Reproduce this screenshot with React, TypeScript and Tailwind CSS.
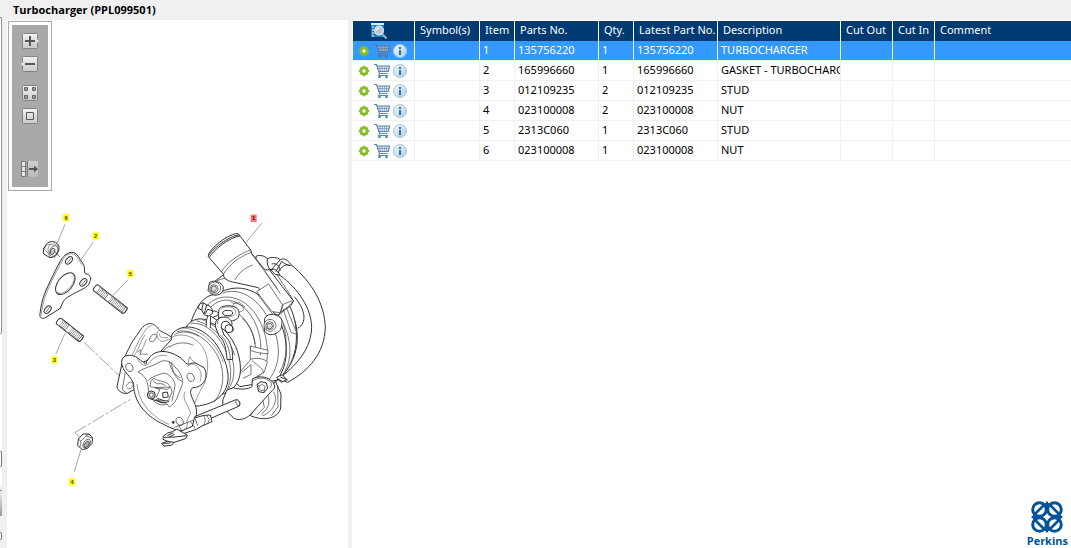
import type { ReactNode } from "react";

type Part = {
	item: number;
	partNo: string;
	qty: number;
	description: string;
};

const parts: Part[] = [
	{ item: 1, partNo: "135756220", qty: 1, description: "TURBOCHARGER" },
	{ item: 2, partNo: "165996660", qty: 1, description: "GASKET - TURBOCHARGER" },
	{ item: 3, partNo: "012109235", qty: 2, description: "STUD" },
	{ item: 4, partNo: "023100008", qty: 2, description: "NUT" },
	{ item: 5, partNo: "2313C060", qty: 1, description: "STUD" },
	{ item: 6, partNo: "023100008", qty: 1, description: "NUT" },
];

const headers = [
	{ label: "Symbol(s)", width: "w-[65px]" },
	{ label: "Item", width: "w-[35px]" },
	{ label: "Parts No.", width: "w-[84px]" },
	{ label: "Qty.", width: "w-[35px]" },
	{ label: "Latest Part No.", width: "w-[84px]" },
	{ label: "Description", width: "w-[123px]" },
	{ label: "Cut Out", width: "w-[52px]" },
	{ label: "Cut In", width: "w-[42px]" },
];

function GearIcon() {
	return (
		<svg width="12" height="12" viewBox="0 0 12 12">
			<g stroke="#86bd2c" strokeWidth="2.600">
				<path d="M6 .8v10.400M.8 6h10.400M2.500 2.500l7 7M9.500 2.500l-7 7" />
			</g>
			<circle cx="6" cy="6" r="4.200" fill="#86bd2c" />
			<circle cx="6" cy="6" r="1.700" fill="#fff" />
		</svg>
	);
}

function CartIcon({ disabled }: { disabled?: boolean }) {
	const color = disabled ? "#5f7590" : "#5b84b1";
	return (
		<svg width="16" height="16" viewBox="0 0 16 16" fill="none">
			<path d="M3.500 3H15.500L14 8H5z" fill={disabled ? "#8fb3dc" : "#e6eef7"} />
			<path d="M0 1.500h2.500L5.500 10.500H13.500M3 3H15.700L14.200 8.500H5" stroke={color} strokeWidth="1.200" />
			<path d="M6 3v5M8.200 3v5M10.400 3v5M12.600 3v5M4 5.500h11" stroke={color} strokeWidth=".6" />
			<path d="M5.500 10.500l-1 2H14" stroke={color} />
			<circle cx="5.500" cy="14" r="1.300" fill={disabled ? color : "#3f86c5"} />
			<circle cx="12.500" cy="14" r="1.300" fill={disabled ? color : "#3f86c5"} />
		</svg>
	);
}

function InfoIcon() {
	return (
		<svg width="14" height="14" viewBox="0 0 14 14">
			<defs>
				<linearGradient id="info" x1="0" y1="0" x2="1" y2="1">
					<stop offset="0" stopColor="#f4f9fd" />
					<stop offset="1" stopColor="#a9cce6" />
				</linearGradient>
			</defs>
			<circle cx="7" cy="7" r="6.500" fill="url(#info)" stroke="#a8c6dd" />
			<path d="M6 3h2v2H6zM6 6h2v5H6z" fill="#3d6d99" />
		</svg>
	);
}

function SearchIcon() {
	return (
		<svg width="16" height="16" viewBox="0 0 16 16" fill="none">
			<path d="M0 0h13v14H0z" fill="#1f7fb8" />
			<path d="M0 1h13" stroke="#d6eefb" strokeWidth="2" />
			<path d="M1 4h2M1 7h2M1 10h2M1 13h2" stroke="#fff" />
			<path d="M11 11l4.500 4.500" stroke="#8fb0cc" strokeWidth="2" />
			<circle cx="8" cy="7.500" r="4.300" fill="#b7c9d8" stroke="#e9f1f7" strokeWidth="1.200" />
			<path d="M5.500 7.500a2.600 2.600 0 0 1 2.500-2.600" stroke="#fff" />
		</svg>
	);
}

function ToolButton({ label, children }: { label: string; children: ReactNode }) {
	return (
		<button type="button" aria-label={label} className="block h-4 w-[18px]">
			<svg width="18" height="16" viewBox="0 0 18 16" fill="none">
				<defs>
					<linearGradient id="tool" x1="0" y1="0" x2="0" y2="1">
						<stop offset="0" stopColor="#f3f3f3" />
						<stop offset="1" stopColor="#c9c9c9" />
					</linearGradient>
				</defs>
				{children}
			</svg>
		</button>
	);
}

function Toolbar() {
	const face = <rect x="1.500" y=".5" width="15" height="15" rx="1" fill="url(#tool)" stroke="#828282" />;
	return (
		<div className="ml-px mt-px w-11 border border-[#a9a9a9] p-[3px]">
			<div className="flex flex-col items-center gap-[7px] bg-[#a9a9a9] pb-[10px] pt-2">
				<ToolButton label="Zoom in">
					{face}
					<path d="M16 6l2 2-2 2z" fill="#e8e8e8" />
					<path d="M4 8h10M9 3v10" stroke="#555" strokeWidth="2" />
				</ToolButton>
				<ToolButton label="Zoom out">
					{face}
					<path d="M2 6L0 8l2 2z" fill="#f3f3f3" />
					<path d="M4 8h10" stroke="#555" strokeWidth="2" />
				</ToolButton>
				<div className="flex flex-col gap-[7px] pb-[30px] pt-[6px]">
					<ToolButton label="Fit page">
						{face}
						<path d="M3.500 2.500h3v3h-3zM11.500 2.500h3v3h-3zM3.500 10.500h3v3h-3zM11.500 10.500h3v3h-3z" fill="#999" stroke="#666" />
					</ToolButton>
					<ToolButton label="Actual size">
						{face}
						<path d="M5.500 4.500h7v7h-7z" stroke="#555" />
					</ToolButton>
				</div>
				<ToolButton label="Toggle list">
					<path d="M.5 .5h4v15h-4z" fill="#e9e9e9" stroke="#777" />
					<path d="M0 5.500h5M0 10.500h5" stroke="#777" />
					<path d="M6 0h11v16H6z" fill="url(#tool)" opacity=".5" />
					<path d="M6.500 0v16" stroke="#777" />
					<path d="M8 8h6" stroke="#555" strokeWidth="2" />
					<path d="M13 4.500L17 8l-4 3.500z" fill="#555" />
				</ToolButton>
			</div>
		</div>
	);
}

function Callout({ x, y, n, active }: { x: number; y: number; n: number; active?: boolean }) {
	return (
		<g>
			<rect x={x - 9} y={y - 11} width="18" height="22" fill={active ? "#f87878" : "#ffff00"} />
			<text
				x={x}
				y={y + 6}
				textAnchor="middle"
				fill={active ? "#5a0000" : "#444400"}
				className="font-['Liberation_Sans'] text-[17px] font-bold"
			>
				{n}
			</text>
		</g>
	);
}

// stud drawn along the x axis, then turned into place
function Stud({ x, y, angle, length }: { x: number; y: number; angle: number; length: number }) {
	const threads: number[] = [];
	for (let t = 6; t < length - 4; t += 5) {
		if (t < length * 0.36 || t > length * 0.47) threads.push(t);
	}
	return (
		<g transform={`translate(${x} ${y}) rotate(${angle})`}>
			<path d={`M0 -11H${length}A5 11 0 0 1 ${length} 11H0A5 11 0 0 1 0 -11z`} fill="#fff" />
			<ellipse cx={length} cy="0" rx="5" ry="11" />
			{threads.map((t) => (
				<path key={t} d={`M${t} -11A5 11 0 0 1 ${t} 11`} strokeWidth="1.800" />
			))}
		</g>
	);
}

function Diagram() {
	return (
		<svg viewBox="0 0 1023 1071" className="block w-full" role="img" aria-label="Turbocharger exploded view">
			{/* leader and centre lines */}
			<g fill="none" stroke="#777" strokeWidth="2">
				<path d="M174 100L151 156M258 154L220 209M361 268L318 314M174 427L147 488M222 775L202 842M764 97L715 157" />
				<path d="M232 455L338 555M203 725L370 625" strokeDasharray="40 6 10 6" />
				<path d="M203 725L218 738" />
			</g>

			{/* gasket, nuts and studs */}
			<g transform="translate(39 27)" fill="#fff" stroke="#333" strokeWidth="3" strokeLinejoin="round">
				<path d="M77 136C82 124 101 121 111 130L117 139 116 153 105 170 90 173 71 162 70 147z" />
				<path d="M77 136L90 133 105 132 116 140M77 136L74 149 85 160 90 173M90 133L84 145 85 160" strokeWidth="1.500" fill="none" />
				<ellipse cx="101" cy="153" rx="11" ry="17" transform="rotate(25 101 153)" strokeWidth="2" />
				<ellipse cx="98" cy="154" rx="6" ry="10" transform="rotate(25 98 154)" fill="#ccc" strokeWidth="2" />
				<path d="M102 152L120 171" strokeWidth="2" />
				<path d="M126 175C137 161 152 153 165 159C174 164 181 181 191 194C196 204 191 217 196 221C212 222 214 235 210 245C205 265 177 270 151 287C128 299 129 307 121 325C106 334 91 345 74 354C64 358 57 350 60 340C64 316 65 304 74 281C83 257 114 194 126 175z" />
				<path d="M130 176C141 162 152 158 164 164C173 170 178 184 187 196" strokeWidth="1.500" fill="none" />
				<path d="M63 347C67 321 70 304 78 283C87 257 115 201 130 177" strokeWidth="1.500" fill="none" />
				<ellipse cx="136" cy="251" rx="38" ry="22" transform="rotate(-51 136 251)" />
				<path d="M109 275C116 286 135 279 149 263C160 250 166 235 161 224" strokeWidth="1.500" fill="none" />
				<ellipse cx="147" cy="181" rx="13" ry="8" transform="rotate(-48 147 181)" />
				<ellipse cx="190" cy="247" rx="13" ry="8" transform="rotate(-48 190 247)" />
				<ellipse cx="83" cy="329" rx="13" ry="8" transform="rotate(-48 83 329)" />
				<path d="M142 188L154 174M185 255L197 240M78 336L90 321" strokeWidth="2" />
				<Stud x={228} y={264} angle={38} length={108} />
				<Stud x={117} y={364} angle={38} length={82} />
			</g>
			<g transform="translate(-21 387)" fill="#fff" stroke="#333" strokeWidth="3" strokeLinejoin="round">
				<path d="M235 357L249 342 267 342 278 354 276 370 263 385 248 389 233 377z" />
				<path d="M235 357L243 364 258 347 267 342M243 364L240 380M258 347L277 355" fill="none" strokeWidth="2" />
				<ellipse cx="260" cy="371" rx="9" ry="15" transform="rotate(35 260 371)" strokeWidth="2" />
				<ellipse cx="260" cy="373" rx="6" ry="11" transform="rotate(35 260 373)" fill="#aaa" strokeWidth="2" />
			</g>

			{/* outlet pipe and compressor housing */}
			<g transform="translate(519 27)" fill="#fff" stroke="#333" strokeWidth="3" strokeLinejoin="round">
				<path d="M228 169C239 163 254 168 262 176C276 170 292 172 301 179C312 173 324 180 332 193C398 248 433 312 436 381C434 460 387 512 323 547L289 532L220 430z" />
				<path d="M300 226C355 266 394 325 395 382C393 445 354 490 305 530" fill="none" />
				<path d="M262 176C260 191 264 202 272 211L301 179M275 192C289 188 301 198 300 213M287 216L305 184C318 194 328 199 334 195M294 218C304 198 319 190 330 197M268 205L285 223 300 226M272 211C282 204 291 207 300 226" fill="none" />
				<path d="M327 325C360 375 366 460 310 522M343 290C378 331 381 369 353 385" fill="none" />
				<path d="M103 245L130 225 250 260 330 320C360 385 360 480 295 540L180 560 20 410C40 330 65 290 100 284z" />
				<path d="M106 285C178 239 248 274 288 342C324 400 335 492 285 548" fill="none" />
				<path d="M127 280C176 260 231 292 264 354C300 410 310 485 266 540" fill="none" strokeWidth="2" />
				<path d="M80 318C108 286 155 281 197 311C245 349 265 416 262 470C260 503 248 522 232 532M91 323C120 292 160 292 199 329C235 369 247 422 241 465M168 338C200 351 224 405 227 445M186 355C208 373 222 398 225 432" fill="none" strokeWidth="2" />
				<path d="M300 350C334 410 345 485 300 534M310 372C323 423 323 477 298 518" fill="none" strokeWidth="2" />
				<path d="M85 170C82 149 150 97 174 101L181 109 212 150 215 161 255 210 268 209 307 260 340 302 333 317 301 338 294 348 278 335 235 263 158 246C139 242 130 233 130 222z" />
				<path d="M86 167C92 151 148 106 177 105M88 173C98 151 151 110 180 108" fill="none" strokeWidth="3" />
				<path d="M124 216C137 190 182 159 211 150M130 224C143 196 185 165 215 157M165 240C175 219 195 203 218 195M215 161L292 266M255 214L301 281" fill="none" strokeWidth="2" />
				<path d="M230 275L266 252 307 314 301 338 276 335zM140 239L132 235 111 242" strokeWidth="2" />
				<path d="M231 281L280 345 300 344 341 303M301 338L310 314M307 314L337 302" fill="none" strokeWidth="2" />
				<path d="M309 326L333 397 350 403M319 322L347 392M291 224L339 298" fill="none" strokeWidth="2" />
				<path d="M89 247C102 239 126 246 130 262C130 281 115 289 96 284L84 271z" />
				<circle cx="104" cy="264" r="18" strokeWidth="2" />
				<circle cx="102" cy="266" r="12" strokeWidth="2" />
				<path d="M95 260L106 258 110 266 104 275 94 272z" fill="#ddd" strokeWidth="2" />
				<path d="M254 355C265 335 297 342 306 360C306 380 303 392 293 397C281 406 264 408 253 393z" />
				<circle cx="270" cy="376" r="18" strokeWidth="2" />
				<circle cx="269" cy="377" r="12" strokeWidth="2" />
				<path d="M261 372L273 370 278 378 271 387 261 384z" fill="#ddd" strokeWidth="2" />
			</g>

			{/* centre housing, clamp and oil fittings */}
			<g transform="translate(519 327)" fill="#fff" stroke="#333" strokeWidth="3" strokeLinejoin="round">
				<path d="M211 138L264 151 264 161C244 160 223 157 211 151z" strokeWidth="2" />
				<path d="M211 178C235 171 257 178 262 187L253 216 222 235M211 138V180L188 206L178 220M184 218L213 194V223L189 235" strokeWidth="2" />
				<path d="M216 182C235 198 252 207 250 220" strokeWidth="2" fill="none" />
				<path d="M18 82C29 63 51 50 81 60C134 74 177 132 181 198C184 232 171 259 145 275L40 320-60 160z" />
				<path d="M32 70C82 65 129 115 147 181C157 218 152 249 137 280M49 62C105 76 154 135 161 199C164 230 156 252 145 268M67 59C113 76 149 121 164 165" fill="none" strokeWidth="2" />
				<path d="M116 35C114 19 140 14 158 19C177 22 180 37 175 52C166 66 133 69 116 54z" />
				<ellipse cx="143" cy="39" rx="15" ry="8" />
				<path d="M123 28C130 18 159 17 166 31C173 45 150 54 132 51M151 3L162 12 176 6 195 21M156 21L164 7 189 18 190 31 178 36" fill="none" strokeWidth="1.500" />
				<path d="M79 80C78 55 83 34 104 33C118 34 119 48 106 49C95 52 91 60 91 84" />
				<path d="M59 12L69 8 79 14 89 18 97 28 98 40 86 48 72 44 66 31 54 24z" />
				<path d="M70 9L65 31M80 15L72 42M97 32L83 28 76 41M92 48L116 64 109 76 91 68z" />
				<path d="M123 52C108 56 104 70 107 82L117 108C134 120 139 149 141 179L158 178C159 149 151 120 132 105L124 82C123 67 131 60 144 66L155 76C160 68 148 54 138 51z" />
				<path d="M112 73C112 60 118 54 126 51M121 104C140 121 150 152 151 177" fill="none" strokeWidth="2" />
				<circle cx="147" cy="86" r="12" />
				<path d="M151 74C159 78 161 88 158 95" fill="none" />
			</g>

			{/* turbine housing */}
			<g transform="translate(279 327)" fill="#fff" stroke="#333" strokeWidth="3" strokeLinejoin="round">
				<path d="M66 190L51 260C51 272 70 283 82 280L105 267 108 209z" />
				<path d="M76 215L67 269 81 280M79 260C81 246 99 241 99 253C98 264 86 270 81 263" fill="none" strokeWidth="2" />
				<path d="M65 184C82 160 89 134 106 112C118 97 126 76 146 71C163 68 171 83 181 93C195 99 205 105 216 112L213 135 188 159 101 200z" />
				<path d="M93 170C109 146 112 123 127 105C136 91 140 80 155 77M100 170C116 154 121 121 135 105M118 158C130 149 134 129 139 118M112 156L123 149 121 166M119 162L144 163M176 91C164 100 174 117 183 124C194 126 202 119 216 115M179 100C177 112 186 116 205 112" fill="none" strokeWidth="1.500" />
				<ellipse cx="159" cy="114" rx="8" ry="13" transform="rotate(35 159 114)" strokeWidth="2" />
				<path d="M178 158L214 119C210 99 232 82 264 81C325 83 375 153 384 222C389 281 344 319 274 319L213 350z" />
				<path d="M216 112C233 101 265 103 286 119C320 142 331 189 317 238C313 257 297 271 286 308M244 84C305 85 352 134 370 187" fill="none" strokeWidth="1.500" />
				<path d="M231 95C281 81 343 131 362 190C374 229 370 275 341 307M224 103C245 92 272 95 297 109" fill="none" strokeWidth="2" />
				<path d="M207 142L219 135C240 125 264 128 280 136M188 153L209 137" fill="none" strokeWidth="2" />
				<path d="M65 187C65 166 85 163 101 168C117 171 128 194 139 185C147 178 149 163 174 156C205 148 244 170 258 190C269 198 276 184 288 190L312 203C320 216 321 236 310 248C301 259 289 263 278 263C265 275 275 289 282 306C293 329 291 345 284 362C291 377 280 391 267 391C244 399 216 386 191 373C145 353 101 311 101 254C98 231 65 215 65 187z" />
				<path d="M263 200C270 188 283 190 289 198C305 211 306 228 300 245M255 275C245 296 263 314 268 329C277 344 262 351 261 364C264 375 259 385 255 391M111 252C115 311 163 356 207 373M112 176C129 205 142 197 151 186C158 171 182 163 201 167M264 192L269 170 275 179 288 191" fill="none" strokeWidth="1.500" />
				<path d="M114 216C131 203 159 199 177 187C194 176 215 185 225 201C241 214 253 242 246 256C237 275 233 294 224 307L209 321L201 312C174 324 149 297 145 270C145 252 138 226 114 216z" strokeWidth="2" />
				<path d="M215 187C215 215 231 241 246 243M208 185C212 209 223 224 239 233M145 242C153 229 184 222 192 219C210 223 224 239 225 256L216 304M150 258L153 242 161 235C183 247 201 244 206 254C212 261 207 269 198 268L154 261zM158 241L171 252C180 250 188 250 197 257M165 263L212 261 216 276 206 301 178 303 169 292 180 269z" fill="none" strokeWidth="2" />
				<circle cx="154" cy="285" r="12" fill="#ccc" />
				<circle cx="154" cy="285" r="6" strokeWidth="2" />
				<path d="M188 278L202 276 205 291 189 293zM167 298L189 309 207 304M151 296L179 306 199 309M174 296L195 303" fill="none" />
				<ellipse cx="88" cy="202" rx="10" ry="13" transform="rotate(-25 88 202)" strokeWidth="2" />
				<ellipse cx="272" cy="232" rx="10" ry="13" transform="rotate(-25 272 232)" strokeWidth="2" />
				<ellipse cx="239" cy="364" rx="10" ry="13" transform="rotate(-25 239 364)" strokeWidth="2" />
				<circle cx="220" cy="367" r="3" fill="#333" />
				<path d="M137 185C143 187 140 193 133 191" />
			</g>

			{/* actuator plate and rod */}
			<g transform="translate(519 327)" fill="#fff" stroke="#333" strokeWidth="3" strokeLinejoin="round">
				<path d="M286 244L303 282 302 324C296 355 251 365 211 347L260 280z" />
				<path d="M280 275C295 296 284 334 247 347M248 298L253 322 232 344M293 258L294 321 274 347M262 282C271 301 269 325 244 342" fill="none" strokeWidth="2" />
				<path d="M290 232L306 224 321 239 303 247zM301 231L323 240M292 236L309 245" />
				<path d="M129 298L141 270 160 263C175 269 204 269 216 260L217 237C231 228 259 228 272 241C286 250 287 266 278 270L211 344C199 357 171 365 159 352L144 338 138 321 128 313z" />
				<path d="M218 242C235 232 255 232 267 242C276 247 276 258 270 263" fill="none" strokeWidth="2" />
				<path d="M231 253L243 245 259 249 263 264 252 278 236 275z" />
				<path d="M238 258L247 253 255 259 253 270 243 272 236 266zM238 258L231 253M253 270L252 278" strokeWidth="2" />
				<path d="M44 350L168 299C178 300 183 307 178 318L51 373z" />
				<ellipse cx="173" cy="308" rx="5" ry="9" transform="rotate(-20 173 308)" strokeWidth="2" />
				<path d="M-39 411L37 379 43 354 72 346 91 345 96 365 66 378 49 388-20 411z" />
				<path d="M45 355L53 377M69 347C78 354 78 369 68 377M79 345L88 359 83 370M-17 382L42 360M-4 376L10 401M31 364L45 385" fill="none" strokeWidth="2" />
				<path d="M-37 399L-23 395-9 387 7 397 22 405 17 416-18 427-25 436-48 438-55 430-37 424-51 418-50 408z" />
				<path d="M-48 412L-15 411 19 407M-37 424L-18 427M-52 430L-28 429M-38 407L-20 398M-33 411L-16 403" fill="none" />
			</g>

			<Callout x={177} y={80} n={6} />
			<Callout x={266} y={135} n={2} />
			<Callout x={370} y={248} n={5} />
			<Callout x={142} y={507} n={3} />
			<Callout x={195} y={873} n={4} />
			<Callout x={740} y={82} n={1} active />
		</svg>
	);
}

function PerkinsLogo() {
	return (
		<div className="flex flex-col items-center self-end pb-px pr-[3px] text-[#00539b]">
			<svg width="34" height="34" viewBox="0 0 34 34" fill="none" stroke="currentColor" strokeWidth="3">
				<circle cx="9.500" cy="9.500" r="6.800" />
				<circle cx="24.500" cy="9.500" r="6.800" />
				<circle cx="9.500" cy="24.500" r="6.800" />
				<circle cx="24.500" cy="24.500" r="6.800" />
				<path d="M5 14L14 5M20 5l9 9M5 20l9 9M20 29l9-9" strokeWidth="2.600" />
				<path d="M17 1l2.500 3L17 7l-2.500-3zM17 27l2.500 3-2.500 3-2.500-3zM1 17l3-2.500L7 17l-3 2.500zM27 17l3-2.500 3 2.500-3 2.500z" fill="currentColor" stroke="none" />
			</svg>
			<span className="font-['Open_Sans'] text-[11px] font-bold leading-[13px]">Perkins</span>
		</div>
	);
}

function PartsTable() {
	const cell = "overflow-hidden whitespace-nowrap border-r border-b border-[#f0f0f0] px-[3px] py-0 align-top";
	return (
		<table className="w-full table-fixed border-separate border-spacing-0 text-left leading-[17px]">
			<thead>
				<tr className="h-5 bg-[#003a73] text-white">
					<th className="w-[62px] border-r border-white p-0">
						<button type="button" aria-label="Search parts" className="ml-[18px] block">
							<SearchIcon />
						</button>
					</th>
					{headers.map((h) => (
						<th
							key={h.label}
							className={`${h.width} whitespace-nowrap border-r border-white py-0 pl-[5px] pr-0 align-top font-normal leading-[18px]`}
						>
							{h.label}
						</th>
					))}
					<th className="py-0 pl-[5px] align-top font-normal leading-[18px]">Comment</th>
				</tr>
			</thead>
			<tbody>
				{parts.map((p) => (
					<tr key={p.item} className={p.item === 1 ? "h-5 bg-[#3399ff] text-white" : "h-5 text-black"}>
						<td className="border-b border-r border-[#f0f0f0] p-0">
							<div className="flex items-center gap-1 pl-[5px]">
								<button type="button" aria-label="Options">
									<GearIcon />
								</button>
								<button type="button" aria-label="Add to cart">
									<CartIcon disabled={p.item === 1} />
								</button>
								<button type="button" aria-label="Part info" className="-ml-px">
									<InfoIcon />
								</button>
							</div>
						</td>
						<td className={cell}></td>
						<td className={cell}>{p.item}</td>
						<td className={cell}>{p.partNo}</td>
						<td className={cell}>{p.qty}</td>
						<td className={cell}>{p.partNo}</td>
						<td className={cell}>{p.description}</td>
						<td className={cell}></td>
						<td className={cell}></td>
						<td className="border-b border-[#f0f0f0]"></td>
					</tr>
				))}
			</tbody>
		</table>
	);
}

export default function App() {
	return (
		<div className="flex min-h-screen bg-[#f0f0f0] font-['Noto_Sans',sans-serif] text-[11px] leading-[19px] text-black">
			<div className="flex w-[2px] shrink-0 flex-col">
				<div className="h-[18px] border-b border-[#8e8f99]"></div>
				<div className="h-[316px] rounded-br-sm border-b border-r border-[#8e8f99] bg-white"></div>
				<div className="h-[117px] bg-white"></div>
				<div className="h-4 rounded-r-sm border-y border-r border-[#777] bg-white"></div>
				<div className="h-[19px] bg-white"></div>
				<div className="h-1"></div>
				<div className="h-[26px] border-t border-[#888] bg-gradient-to-b from-[#f0f0f0] to-[#999]"></div>
				<div className="h-4"></div>
				<div className="h-2 rounded-r-sm border-y border-r border-[#777]"></div>
			</div>
			<div className="flex min-w-0 flex-1 flex-col pl-[5px]">
				<h1 className="h-5 pl-[6px] font-['Open_Sans'] text-[11px] font-bold leading-5">Turbocharger (PPL099501)</h1>
				<div className="flex flex-1 gap-1">
					<section className="w-[341px] shrink-0 bg-white">
						<Toolbar />
						<Diagram />
					</section>
					<section className="flex min-w-0 flex-1 flex-col justify-between bg-white pl-px pt-px">
						<PartsTable />
						<PerkinsLogo />
					</section>
				</div>
			</div>
		</div>
	);
}
